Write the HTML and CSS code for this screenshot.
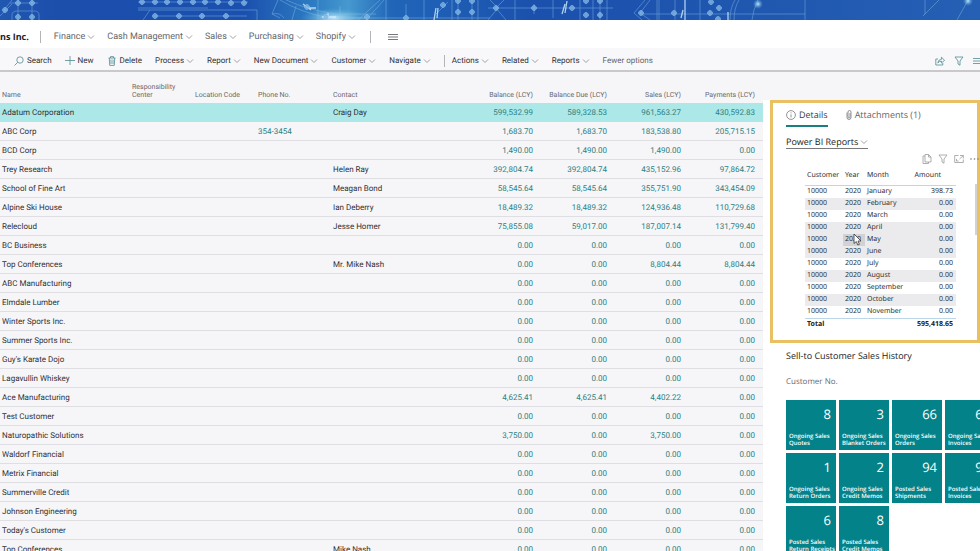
FILE: index.html
```html
<!DOCTYPE html>
<html lang="en">
  <head>
    <meta charset="utf-8">
    <title>Customers</title>
    <link rel="stylesheet" href="styles.css">
  </head>
  <body>
    <!-- shared icons -->
    <svg class="defs" aria-hidden="true">
      <symbol id="chev" viewBox="0 0 8 8"><path d="M1 2.5 4 5.5 7 2.5"/></symbol>
      <symbol id="funnel" viewBox="0 0 10 10"><path d="M1 1h8L6 5v4.2L4 8V5z"/></symbol>
      <symbol id="node" viewBox="0 0 6 6"><circle cx="3" cy="3" r="2.3"/><path d="M0 3h6M3 0v6"/></symbol>
    </svg>

    <svg class="banner" viewBox="0 0 980 20" preserveAspectRatio="xMidYMid slice" aria-hidden="true">
      <defs>
        <linearGradient id="sky">
          <stop offset="0" stop-color="#2158b0"/>
          <stop offset=".06" stop-color="#1c4eac"/>
          <stop offset=".25" stop-color="#1b50ae"/>
          <stop offset=".32" stop-color="#2d7cc2"/>
          <stop offset=".355" stop-color="#4699cf"/>
          <stop offset=".4" stop-color="#2065b8"/>
          <stop offset=".55" stop-color="#1b50ad"/>
          <stop offset=".82" stop-color="#2159b0"/>
          <stop offset="1" stop-color="#2560b5"/>
        </linearGradient>
        <radialGradient id="glow">
          <stop offset="0" stop-color="#d8f6ff" stop-opacity=".9"/>
          <stop offset="1" stop-color="#5bb4e0" stop-opacity="0"/>
        </radialGradient>
      </defs>
      <rect width="980" height="20" fill="url(#sky)"/>
      <ellipse cx="334" cy="18" rx="34" ry="10" fill="url(#glow)"/>
      <circle cx="758" cy="4" r="5" fill="url(#glow)"/>
      <circle cx="968" cy="1" r="5" fill="url(#glow)"/>
      <g class="ink">
        <path d="M12 20v-5q0-4 5-4h17q5 0 5 4v5M18 0v20M32 0v20M0 16 12 4M4 10l8-10M10 3h28"/>
        <path d="M138 2h110M138 8h70M143 20l7-10h107v10M155 16h92M138 10h12"/>
        <path d="M278 0l-6 14 8 4M296 6l-4 14M280 0q20 12 48 18h40M286 0q22 10 50 14h40M272 14q8-2 12 4"/>
        <path d="M318 0v20M340 6v14M358 20l22-20M366 20l18-20M386 0v20M406 4v14M424 0v20M350 18h140M436 14l12-12M452 0v20M458 0v20M472 0v20M478 0v20"/>
        <path d="M488 8h125M490 0l8 8-10 12M504 0l-8 8 10 12M515 0v20M534 4v10M553 0v18M580 0v20M593 0v20M600 0v20M607 0v20"/>
        <path d="M642 14h163M645 0l-11 13 8 7M650 0l-10 13 10 7M657 0v20M659 0v20M675 0v20M700 0v20M730 20q0-12 5-20M734 20q0-12 5-20M752 20q1-10 6-20M805 0v20M923 16l16-16M957 20l10-18M925 14V0"/>
      </g>
      <g class="ink bold">
        <path d="M303 4l8 6M308 8h8M322 17h14M328 13v6M434 20l2-12M437 18l1-10M562 14l3-10M565 13l2-12M681 18l2-8M685 0v20M728 20v-8"/>
      </g>
      <g class="nodes" id="nodes"></g>
    </svg>

    <header class="menu">
      <div class="company">ns Inc.</div>
      <nav class="menu-items" aria-label="Main">
        <button>Finance<svg class="chev"><use href="#chev"/></svg></button>
        <button>Cash Management<svg class="chev"><use href="#chev"/></svg></button>
        <button>Sales<svg class="chev"><use href="#chev"/></svg></button>
        <button>Purchasing<svg class="chev"><use href="#chev"/></svg></button>
        <button>Shopify<svg class="chev"><use href="#chev"/></svg></button>
      </nav>
      <button class="burger" aria-label="More"><svg viewBox="0 0 10 8"><path d="M0 1.5h10M0 4h10M0 6.5h10"/></svg></button>
    </header>

    <div class="actions">
      <button><svg class="icon" viewBox="0 0 10 10"><circle cx="6" cy="4" r="3.2"/><path d="M3.6 6.4.5 9.5"/></svg>Search</button>
      <button><svg class="icon" viewBox="0 0 10 10"><path d="M5 0v9M0 4.5h10"/></svg>New</button>
      <button><svg class="icon" viewBox="0 0 10 10"><path d="M1.5 2h7M3.5 2V.6h3V2M2.3 2l.4 7.4h4.6L7.7 2M4 3.5v4.5M6 3.5v4.5"/></svg>Delete</button>
      <button>Process<svg class="chev"><use href="#chev"/></svg></button>
      <button>Report<svg class="chev"><use href="#chev"/></svg></button>
      <button>New Document<svg class="chev"><use href="#chev"/></svg></button>
      <button>Customer<svg class="chev"><use href="#chev"/></svg></button>
      <button>Navigate<svg class="chev"><use href="#chev"/></svg></button>
      <span class="divider"></span>
      <button>Actions<svg class="chev"><use href="#chev"/></svg></button>
      <button>Related<svg class="chev"><use href="#chev"/></svg></button>
      <button>Reports<svg class="chev"><use href="#chev"/></svg></button>
      <button class="fewer">Fewer options</button>
      <div class="tools">
        <button aria-label="Share"><svg class="icon" viewBox="0 0 10 10"><path d="M3 3H.8v6h7V7M2.8 7Q3 3.6 6.4 3.4V1.2L9.6 4.3 6.4 7V5.2Q4.2 5 2.8 7z"/></svg></button>
        <button aria-label="Filter"><svg class="icon"><use href="#funnel"/></svg></button>
        <button aria-label="List view"><svg class="icon" viewBox="0 0 10 10"><path d="M0 2.5h10M0 5h10M0 7.5h10"/></svg></button>
      </div>
    </div>

    <main class="page">
      <table class="customers">
        <colgroup>
          <col><col class="c-resp"><col class="c-loc"><col class="c-phone"><col class="c-contact">
          <col class="c-amount"><col class="c-amount"><col class="c-amount"><col class="c-amount">
        </colgroup>
        <thead>
          <tr>
            <th>Name</th>
            <th>Responsibility Center</th>
            <th>Location Code</th>
            <th>Phone No.</th>
            <th>Contact</th>
            <th class="num">Balance (LCY)</th>
            <th class="num">Balance Due (LCY)</th>
            <th class="num">Sales (LCY)</th>
            <th class="num">Payments (LCY)</th>
          </tr>
        </thead>
        <tbody id="customers"></tbody>
      </table>

      <aside class="factbox">
        <section class="report">
          <div class="tabs">
            <button class="tab active"><svg class="icon" viewBox="0 0 10 10"><circle cx="5" cy="5" r="4.4"/><path d="M5 4.4v3M5 2.4v1"/></svg>Details</button>
            <button class="tab"><svg class="icon clip" viewBox="0 0 10 10"><path d="M3 2.500v5q0 2 2 2t2-2V2Q7 .5 5.500.5T4 2v5q0 1 1 1t1-1V3"/></svg>Attachments (1)</button>
          </div>
          <button class="report-name">Power BI Reports<svg class="chev"><use href="#chev"/></svg></button>
          <div class="report-tools">
            <button aria-label="Copy"><svg class="icon" viewBox="0 0 10 10"><path d="M3 2.500V.5h3.500L9 3v5H3zM6.500.5V3H9M3 2H1v7.500h5.500V8"/></svg></button>
            <button aria-label="Filters"><svg class="icon"><use href="#funnel"/></svg></button>
            <button aria-label="Focus mode"><svg class="icon" viewBox="0 0 10 10"><path d="M4.500 1.500H.7v7h8.600V5.500M6 1.500h3.300v3M9.300 1.500 5.500 5M2.500 5v2h2"/></svg></button>
            <button aria-label="More options"><svg class="icon dots" viewBox="0 0 10 10"><circle cx="1" cy="5" r=".8"/><circle cx="4.500" cy="5" r=".8"/><circle cx="8" cy="5" r=".8"/></svg></button>
          </div>
          <div class="visual">
            <table class="months">
              <thead>
                <tr><th class="m-cust">Customer</th><th class="m-year">Year</th><th>Month</th><th class="m-amount">Amount</th></tr>
              </thead>
              <tbody id="months"></tbody>
              <tfoot>
                <tr><td colspan="2">Total</td><td colspan="2" class="num">595,418.65</td></tr>
              </tfoot>
            </table>
            <div class="scroll"></div>
          </div>
        </section>

        <section class="history">
          <h2>Sell-to Customer Sales History</h2>
          <p>Customer No.</p>
          <div class="tiles">
            <a href="#"><b>8</b>Ongoing Sales Quotes</a>
            <a href="#"><b>3</b>Ongoing Sales Blanket Orders</a>
            <a href="#"><b>66</b>Ongoing Sales Orders</a>
            <a href="#"><b>67</b>Ongoing Sales Invoices</a>
            <a href="#"><b>1</b>Ongoing Sales Return Orders</a>
            <a href="#"><b>2</b>Ongoing Sales Credit Memos</a>
            <a href="#"><b>94</b>Posted Sales Shipments</a>
            <a href="#"><b>95</b>Posted Sales Invoices</a>
            <a href="#"><b>6</b>Posted Sales Return Receipts</a>
            <a href="#"><b>8</b>Posted Sales Credit Memos</a>
          </div>
        </section>
      </aside>
    </main>
    <script src="script.js"></script>
  </body>
</html>
```

FILE: styles.css
```css
* {
  box-sizing: border-box;
}
body {
  margin: 0;
  height: 100vh;
  overflow: hidden;
  display: flex;
  flex-direction: column;
  font-family: Roboto, "Open Sans", sans-serif;
  font-size: 8px;
  line-height: 12px;
  text-rendering: geometricPrecision;
  color: #303034;
  background: #fff;
}
button {
  display: flex;
  align-items: center;
  padding: 0;
  border: 0;
  background: none;
  font: inherit;
  text-rendering: inherit;
  color: inherit;
  white-space: nowrap;
  cursor: pointer;
}
a {
  color: inherit;
  text-decoration: none;
}
.defs {
  position: absolute;
  width: 0;
  height: 0;
}
.chev {
  width: 8px;
  height: 8px;
  margin-left: 2px;
  fill: none;
  stroke: #8a8a8e;
  stroke-width: 0.8;
}
.icon {
  width: 10px;
  height: 10px;
  fill: none;
  stroke: #4f8a90;
  stroke-width: 0.8;
}

/* banner */
.banner {
  display: block;
  flex: none;
  width: 100%;
  height: 20px;
}
.ink {
  fill: none;
  stroke: #8fc3ec;
  stroke-width: 0.7;
  opacity: 0.6;
}
.ink.bold {
  stroke: #d5efff;
  stroke-width: 1.3;
  opacity: 0.8;
}
.nodes {
  fill: #4a8fd0;
  stroke: #9ccbef;
  stroke-width: 0.9;
  opacity: 0.8;
}

/* top menu */
.menu {
  display: flex;
  align-items: center;
  flex: none;
  height: 28px;
  padding-top: 5px;
  font-size: 9px;
  color: #65656a;
}
.company {
  min-width: 28px;
  font-family: "Open Sans", sans-serif;
  font-weight: bold;
  text-align: right;
  color: #222;
  white-space: nowrap;
}
.menu-items {
  display: flex;
  gap: 12px;
  margin-left: 11px;
  padding: 0 14px 0 13px;
  border-left: 1px solid #b4b4b8;
  border-right: 1px solid #b4b4b8;
}
.burger {
  margin-left: 17px;
}
.burger svg {
  width: 10px;
  height: 8px;
  stroke: #77777c;
}

/* action bar */
.actions {
  display: flex;
  align-items: center;
  gap: 13px;
  flex: none;
  height: 24px;
  padding-top: 3px;
  padding-left: 14px;
  background: #f8f8fa;
  border-bottom: 2px solid #c9c9cc;
  overflow: hidden;
}
.actions button .icon {
  margin-right: 3px;
}
.divider {
  width: 1px;
  height: 12px;
  margin-right: -6px;
  background: #b4b4b8;
}
.fewer {
  color: #65656a;
}
.tools {
  display: flex;
  gap: 6px;
  margin-left: auto;
  margin-right: -6px;
}

/* list */
.page {
  display: grid;
  grid-template-columns: 1fr 217px;
  align-items: start;
  flex: 1;
  min-height: 0;
  background: #f6f6f9;
}
table {
  border-collapse: separate;
  border-spacing: 0;
  table-layout: fixed;
  width: 100%;
}
th {
  font-weight: normal;
  text-align: left;
}
.customers td,
.customers th {
  padding: 1px 0 0 2px;
}
.customers th {
  height: 31px;
  padding-bottom: 4px;
  font-size: 7px;
  line-height: 8px;
  vertical-align: bottom;
  color: #68686c;
}
.customers td {
  height: 19px;
  border-bottom: 1px solid #dfdfe3;
  white-space: nowrap;
}
.customers tr.selected td {
  background: #ade8e8;
  border-color: #ade8e8;
}
.c-resp,
.c-loc {
  width: 63px;
}
.c-phone {
  width: 75px;
}
.c-contact {
  width: 136px;
}
.c-amount {
  width: 74px;
}
.customers .num {
  padding-left: 0;
  padding-right: 8px;
  text-align: right;
}
.customers th.num {
  white-space: nowrap;
}
.customers a {
  color: #2b8082;
}

/* fact box */
.factbox {
  align-self: stretch;
  min-width: 0;
  overflow: hidden;
  margin-top: 28px;
  padding-left: 7px;
  background: #fff;
  font-family: "Open Sans", sans-serif;
}
.report {
  height: 243px;
  padding: 6px 0 0 13px;
  border: 3px solid #e9c062;
}
.tabs {
  display: flex;
  gap: 16px;
  font-size: 9px;
}
.tab {
  height: 18px;
  padding-bottom: 4px;
  border-bottom: 2px solid transparent;
  color: #65656a;
}
.tab.active {
  border-color: #1a7f80;
  color: #3c3c40;
}
.tab .icon {
  margin-right: 3px;
  stroke: #77777c;
}
.tab .clip {
  margin-right: 1px;
}
.report-name {
  height: 13px;
  margin-top: 9px;
  border-bottom: 1px solid #77777c;
  font-size: 9px;
  color: #222;
}
.report-tools {
  display: flex;
  justify-content: flex-end;
  gap: 6px;
  margin: 5px -3px 0 0;
}
.report-tools .icon {
  stroke: #9a9a9e;
}
.report-tools .dots {
  fill: #77777c;
  stroke: none;
}
.visual {
  display: flex;
  justify-content: space-between;
  padding-left: 19px;
}
.months {
  width: 151px;
  font-family: "Noto Sans", sans-serif;
  font-size: 7px;
}
.months td,
.months th {
  padding: 0 0 0 2px;
}
.months th {
  height: 22px;
  padding-top: 2px;
  border-bottom: 1px solid #bcd6ea;
}
.months td {
  height: 12px;
}
.m-cust {
  width: 38px;
}
.m-year {
  width: 22px;
}
.months .m-amount {
  padding-right: 15px;
  text-align: right;
}
.months .num {
  padding-right: 3px;
  text-align: right;
}
.months tbody tr:nth-child(even) td,
.months tbody tr.hover td {
  background: #ebebed;
}
.months tbody tr.hover td.over {
  position: relative;
  background: #d2d2d4;
}
.cursor {
  position: absolute;
  left: 10px;
  top: -1px;
  width: 9px;
  height: 13px;
  fill: #fff;
  stroke: #333;
  stroke-width: 0.8;
}
.months tfoot td {
  border-top: 1px solid #bcd6ea;
  line-height: 11px;
  font-weight: bold;
  color: #222;
}
.scroll {
  width: 2px;
  height: 51px;
  margin-top: 20px;
  background: #d2d2d4;
}
.history {
  padding: 7px 0 0 16px;
}
.history h2 {
  margin: 0;
  font-size: 9px;
  font-weight: 500;
  color: #222;
}
.history p {
  margin: 14px 0 12px;
  color: #68686c;
}
.tiles {
  display: grid;
  grid-template-columns: repeat(4, 50px);
  grid-auto-rows: 50px;
  gap: 3px;
}
.tiles a {
  display: flex;
  flex-direction: column;
  padding: 6px 0 0 3px;
  background: #04828a;
  color: #fff;
  font-size: 6px;
  font-weight: 600;
  line-height: 7px;
}
.tiles b {
  height: 27px;
  padding-right: 5px;
  font-size: 13px;
  font-weight: normal;
  line-height: 16px;
  text-align: right;
}
```

FILE: script.js
```js
// name, contact, balance, balance due, sales, payments, phone
const customers = [
  ["Adatum Corporation", "Craig Day", "599,532.99", "589,328.53", "961,563.27", "430,592.83"],
  ["ABC Corp", "", "1,683.70", "1,683.70", "183,538.80", "205,715.15", "354-3454"],
  ["BCD Corp", "", "1,490.00", "1,490.00", "1,490.00", "0.00"],
  ["Trey Research", "Helen Ray", "392,804.74", "392,804.74", "435,152.96", "97,864.72"],
  ["School of Fine Art", "Meagan Bond", "58,545.64", "58,545.64", "355,751.90", "343,454.09"],
  ["Alpine Ski House", "Ian Deberry", "18,489.32", "18,489.32", "124,936.48", "110,729.68"],
  ["Relecloud", "Jesse Homer", "75,855.08", "59,017.00", "187,007.14", "131,799.40"],
  ["BC Business"],
  ["Top Conferences", "Mr. Mike Nash", "0.00", "0.00", "8,804.44", "8,804.44"],
  ["ABC Manufacturing"],
  ["Elmdale Lumber"],
  ["Winter Sports Inc."],
  ["Summer Sports Inc."],
  ["Guy's Karate Dojo"],
  ["Lagavullin Whiskey"],
  ["Ace Manufacturing", "", "4,625.41", "4,625.41", "4,402.22", "0.00"],
  ["Test Customer"],
  ["Naturopathic Solutions", "", "3,750.00", "0.00", "3,750.00", "0.00"],
  ["Waldorf Financial"],
  ["Metrix Financial"],
  ["Summerville Credit"],
  ["Johnson Engineering"],
  ["Today's Customer"],
  ["Top Conferences", "Mike Nash"],
];

const link = text => `<a href="#">${text}</a>`;

document.getElementById("customers").innerHTML = customers.map((c, i) => {
  const [name, contact = "", bal = "0.00", due = "0.00", sales = "0.00", paid = "0.00", phone] = c;
  const amounts = [bal, due, sales, paid].map(v => `<td class="num">${link(v)}</td>`).join("");
  return `<tr${i === 0 ? ' class="selected"' : ""}><td>${name}</td><td></td><td></td>` +
    `<td>${phone ? link(phone) : ""}</td><td>${contact}</td>${amounts}</tr>`;
}).join("");

const months = ["January", "February", "March", "April", "May", "June", "July",
  "August", "September", "October", "November"];
const cursor = '<svg class="cursor" viewBox="0 0 9 13"><path d="M1 1v9.500l2.300-2 1.500 3.500 1.600-.7L5 8h3z"/></svg>';

document.getElementById("months").innerHTML = months.map(m => {
  const over = m === "May";
  return `<tr${over ? ' class="hover"' : ""}><td>10000</td>` +
    `<td${over ? ' class="over"' : ""}>2020${over ? cursor : ""}</td>` +
    `<td>${m}</td><td class="num">${m === "January" ? "398.73" : "0.00"}</td></tr>`;
}).join("");

// joints of the blueprint drawing
const nodes = [
  [5, 10], [18, 3], [32, 3], [18, 17], [32, 17],
  [142, 2], [155, 2], [167, 2], [180, 2], [193, 2], [205, 2], [218, 2], [231, 3], [244, 3],
  [155, 16], [179, 16], [202, 16], [226, 16],
  [307, 7], [326, 17], [367, 17], [406, 18], [443, 5], [458, 1], [472, 1], [458, 12], [472, 12],
  [496, 8], [534, 8], [572, 8], [586, 1], [600, 1], [586, 15], [600, 15],
  [641, 13], [674, 13], [711, 2], [719, 8], [710, 13], [718, 19],
];
document.getElementById("nodes").innerHTML = nodes
  .map(([x, y]) => `<use href="#node" x="${x - 3}" y="${y - 3}" width="6" height="6"/>`).join("");
```
